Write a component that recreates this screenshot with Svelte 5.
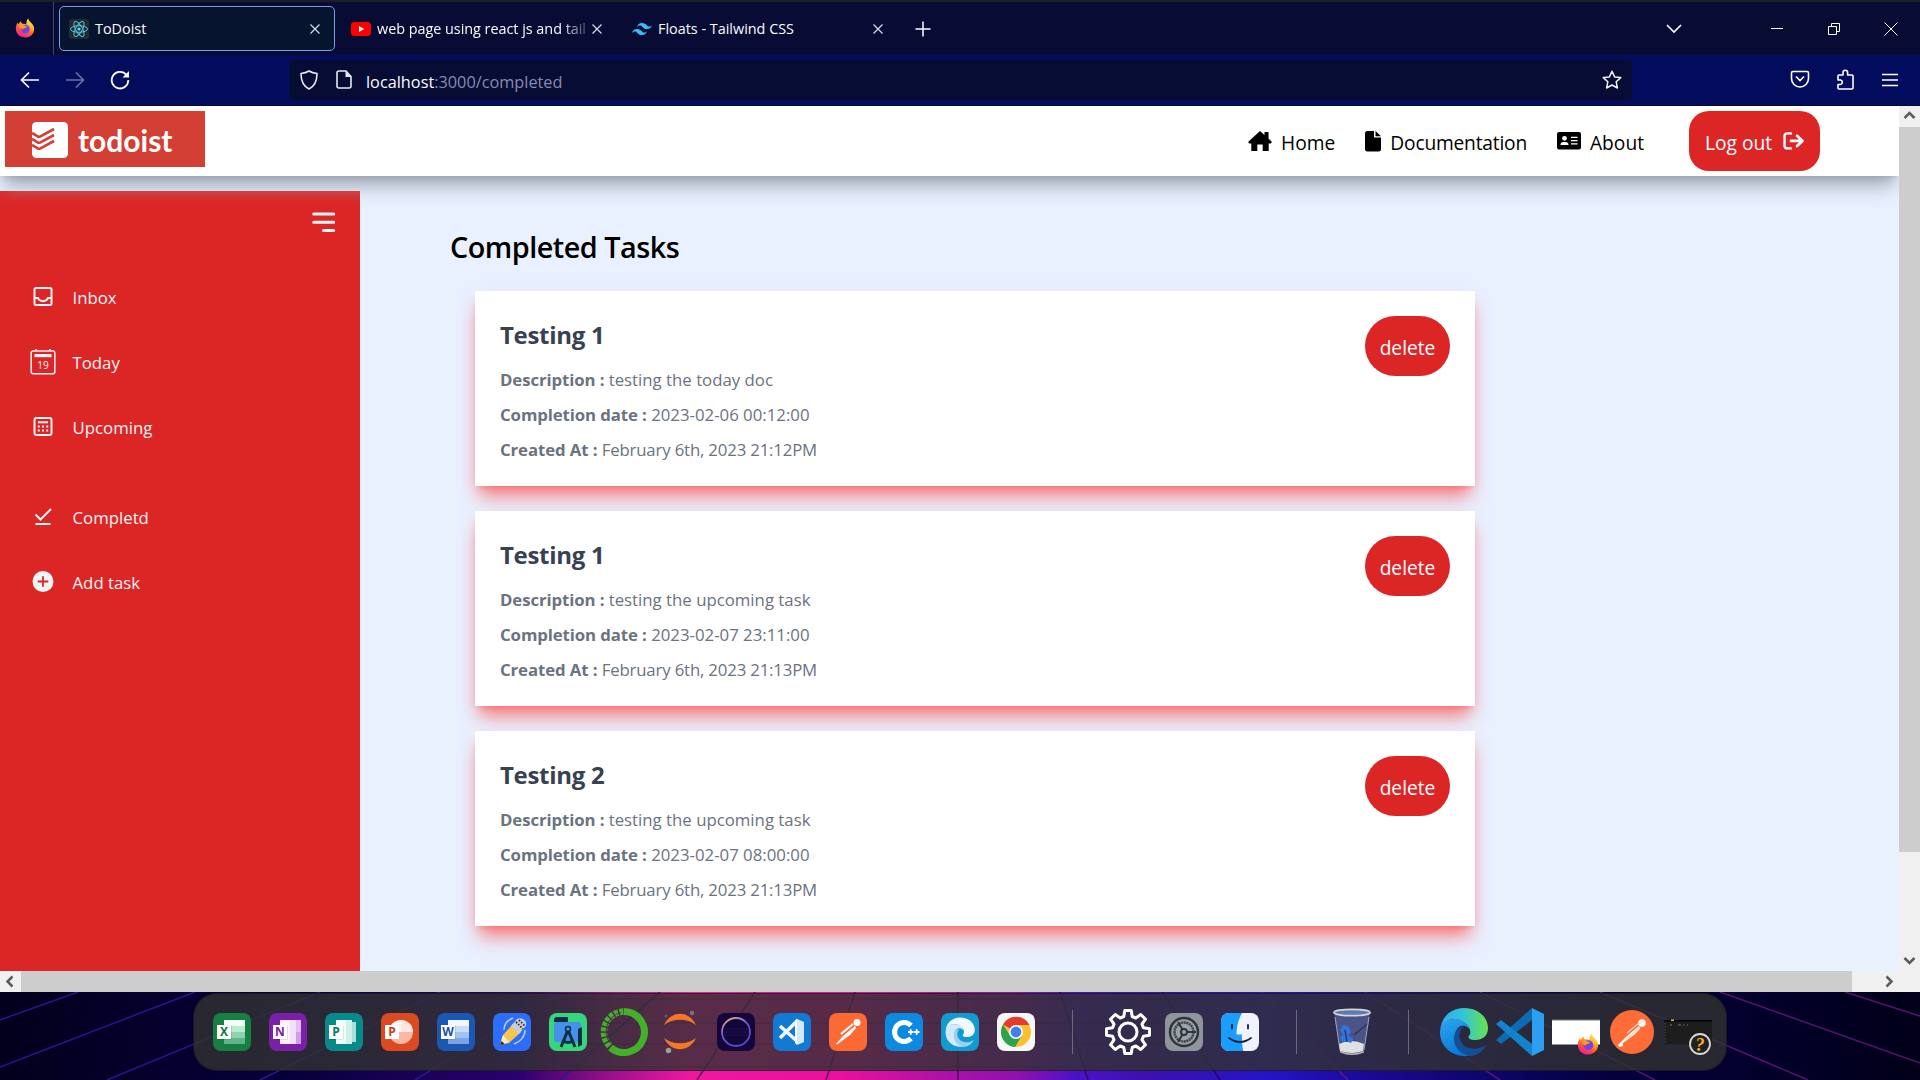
<script>
  const tabs = [
    { icon: 'react', title: 'ToDoist', active: true },
    { icon: 'youtube', title: 'web page using react js and tail', clipped: true },
    { icon: 'tailwind', title: 'Floats - Tailwind CSS' },
  ];

  const menu = [
    { icon: 'inbox', label: 'Inbox' },
    { icon: 'today', label: 'Today' },
    { icon: 'upcoming', label: 'Upcoming' },
    { icon: 'check', label: 'Completd', gap: true },
    { icon: 'add', label: 'Add task' },
  ];

  const tasks = [
    { title: 'Testing 1', description: 'testing the today doc', due: '2023-02-06 00:12:00', created: 'February 6th, 2023 21:12PM' },
    { title: 'Testing 1', description: 'testing the upcoming task', due: '2023-02-07 23:11:00', created: 'February 6th, 2023 21:13PM' },
    { title: 'Testing 2', description: 'testing the upcoming task', due: '2023-02-07 08:00:00', created: 'February 6th, 2023 21:13PM' },
  ];

  const dock = [
    'excel', 'onenote', 'publisher', 'powerpoint', 'word', 'notability', 'android', 'anaconda', 'jupyter',
    'eclipse', 'vscode', 'postman', 'cpp', 'edge', 'chrome', 'sep', 'gear', 'settings', 'finder', 'sep',
    'trash', 'sep', 'edgeBig', 'codeBig', 'ffwin', 'postmanBig', 'terminal',
  ];

  const office = {
    excel: { letter: 'X', tile: '#15803f', ink: '#15713c', c: ['#f2fff8', '#b9ecd0', '#8fd3ae', '#63b388'] },
    onenote: { letter: 'N', tile: '#7b1fa8', ink: '#7719aa', c: ['#fbf2ff', '#f3defc', '#e5bdf5', '#d29bea'] },
    publisher: { letter: 'P', tile: '#068a8a', ink: '#077568', c: ['#effffd', '#cdf0ec', '#a9dfda', '#7fc9c3'] },
    word: { letter: 'W', tile: '#1b57b5', ink: '#1b52ad', c: ['#f2f7ff', '#c9dcfb', '#a3c2f4', '#7ba3e6'] },
  };
</script>

{#snippet firefox(size)}
  <svg width={size} height={size} viewBox="0 0 24 24">
    <defs>
      <linearGradient id="ffFlame" x1="0.8" y1="0" x2="0.3" y2="1">
        <stop offset="0" stop-color="#fff44f" /><stop offset="0.35" stop-color="#ffb42a" />
        <stop offset="0.65" stop-color="#ff5a36" /><stop offset="1" stop-color="#f0159a" />
      </linearGradient>
    </defs>
    <path d="M15.6 0.6c1 1.600 1.400 3 3 4.500C21.500 7.600 23 10 23 13.200 23 19.200 18 23.500 12 23.500S1 19 1 13c0-3 .8-5.600 2.300-7.600.2 1 .5 1.600 1 2C5 6 6 4.600 7.300 3.900c0 1.500.5 2.400 1.500 2.900 2.500-.2 4 .3 4.500 1.200C14 6 13.500 3 15.600.600z" fill="url(#ffFlame)" />
    <circle cx="12.400" cy="13.300" r="5.300" fill="#7542e5" />
    <path d="M5.200 9.200c2.200-1.400 4.600-1.100 6 .1 1.400-.1 2.700.2 3.300.9-1.200 1.900-4.500 1.700-5.600 3.600C7.600 12.400 5.400 11.600 5.200 9.200z" fill="#ff9b1c" />
  </svg>
{/snippet}

{#snippet closeX(size)}
  <svg width={size} height={size} viewBox="0 0 12 12"><path d="M1.500 1.500l9 9M10.500 1.500l-9 9" stroke="#d8dcec" stroke-width="1.200" fill="none" /></svg>
{/snippet}

{#snippet favicon(name)}
  {#if name === 'react'}
    <svg width="20" height="20" viewBox="0 0 20 20">
      <rect width="20" height="20" rx="2.500" fill="#222a30" />
      <g fill="none" stroke="#55c3de" stroke-width="1">
        <ellipse cx="10" cy="10" rx="8.500" ry="3.300" />
        <ellipse cx="10" cy="10" rx="8.500" ry="3.300" transform="rotate(60 10 10)" />
        <ellipse cx="10" cy="10" rx="8.500" ry="3.300" transform="rotate(120 10 10)" />
      </g>
      <circle cx="10" cy="10" r="1.600" fill="#61dafb" />
    </svg>
  {:else if name === 'youtube'}
    <svg width="20" height="20" viewBox="0 0 20 20"><rect y="3" width="20" height="14" rx="3.500" fill="#f00" /><path d="M8 7l5.200 3L8 13z" fill="#fff" /></svg>
  {:else}
    <svg width="20" height="20" viewBox="0 0 24 24"><path fill="#38bdf8" d="M12 4.800c-3.200 0-5.200 1.600-6 4.800 1.200-1.600 2.600-2.200 4.200-1.800.9.200 1.600.9 2.300 1.700C13.700 10.700 15 12 18 12c3.200 0 5.200-1.600 6-4.800-1.200 1.600-2.600 2.200-4.200 1.800-.9-.2-1.600-.9-2.300-1.700C16.300 6.100 15 4.800 12 4.800zM6 12c-3.200 0-5.200 1.600-6 4.800 1.200-1.600 2.600-2.200 4.200-1.800.9.200 1.600.9 2.300 1.700 1.200 1.200 2.500 2.500 5.500 2.500 3.200 0 5.200-1.600 6-4.800-1.200 1.600-2.600 2.200-4.200 1.800-.9-.2-1.600-.9-2.300-1.700C10.300 13.300 9 12 6 12z" /></svg>
  {/if}
{/snippet}

{#snippet sideIcon(name)}
  <svg width="26" height="26" viewBox="0 0 26 26" fill="none" stroke="#f3f4f6">
    {#if name === 'inbox'}
      <rect x="4.500" y="4" width="17" height="17" rx="1.500" stroke-width="2" />
      <path d="M4.500 14h3.500c1.500 4.200 8.500 4.200 10 0h3.500" stroke-width="2" />
    {:else if name === 'today'}
      <rect x="1.200" y="2" width="23.600" height="22.800" rx="2" stroke-width="1.500" />
      <path d="M6 0v2M20 0v2" stroke-width="1.500" />
      <rect x="4.500" y="5" width="17" height="3.200" fill="#f3f4f6" stroke="none" />
      <text class="day" x="13" y="20" text-anchor="middle">19</text>
    {:else if name === 'upcoming'}
      <rect x="4.500" y="4" width="17" height="17" rx="2" stroke-width="2" />
      <path d="M8 8.300h10" stroke-width="2" />
      <path d="M7.800 12.500h10.500M7.800 16.500h10.500" stroke-width="2" stroke-dasharray="2 2.200" />
    {:else if name === 'check'}
      <path d="M5.500 10.500l5 5L21 5" stroke-width="2" />
      <path d="M5.500 20h15" stroke-width="2" />
    {:else}
      <circle cx="13" cy="12.500" r="10.500" fill="#f3f4f6" stroke="none" />
      <path d="M13 7.200v10.600M7.700 12.500h10.600" stroke="#dc2626" stroke-width="1.800" />
    {/if}
  </svg>
{/snippet}

{#snippet dockIcon(name)}
  <svg width="48" height="48" viewBox="0 0 48 48">
    {#if office[name]}
      {@const o = office[name]}
      <rect x="5" y="5" width="38" height="38" rx="8" fill={o.tile} />
      {#if name === 'publisher'}<rect x="22" y="14" width="14" height="20" fill={o.c[2]} />{/if}
      {#if name === 'onenote' || name === 'publisher'}
        <rect x="16" y="12" width="16" height="24" fill={o.c[0]} />
        <rect x="26" y="12" width="6" height="24" fill={o.c[1]} />
        {#if name === 'onenote'}<path d="M32 12h5v24h-5z" fill={o.c[2]} /><path d="M32 24h5v12h-5z" fill={o.c[3]} />{/if}
      {:else}
        <rect x="16" y="12" width="21" height="6" fill={o.c[0]} />
        <rect x="16" y="18" width="21" height="6" fill={o.c[1]} />
        <rect x="16" y="24" width="21" height="6" fill={o.c[2]} />
        <rect x="16" y="30" width="21" height="6" fill={o.c[3]} />
      {/if}
      <rect x="9.500" y="17.500" width="14" height="14" fill="#0003" />
      <rect x="9" y="17" width="14" height="14" fill="#fff" />
      <text class="office" x="16" y="28" text-anchor="middle" fill={o.ink}>{o.letter}</text>
    {:else if name === 'powerpoint'}
      <rect x="5" y="5" width="38" height="38" rx="8" fill="#dc4a22" />
      <circle cx="25" cy="24" r="12" fill="#fbb9a5" />
      <path d="M25 24V12a12 12 0 0 1 12 12z" fill="#ffe7df" />
      <path d="M25 12a12 12 0 0 0-12 12h12z" fill="#fff4ef" />
      <rect x="9" y="17" width="14" height="14" fill="#fff" />
      <text class="office" x="16" y="28" text-anchor="middle" fill="#c8401d">P</text>
    {:else if name === 'notability'}
      <rect x="5" y="5" width="38" height="38" rx="8" fill="#2c6dfb" />
      <path d="M16 22C16 16 20 12 25 10M37 22c0 7-5 12-11 14" stroke="#b9cdf5" stroke-width="1.500" fill="none" />
      <path d="M12 37l3-10L25 16l8 8-12 11z" fill="#f7c548" />
      <path d="M15 27l6 7-9 3z" fill="#ffe9c4" /><path d="M12 37l1.500-4 3 3z" fill="#222" />
      <path d="M23 18l6-7c5-3 12 3 8 8l-6 7z" fill="#c8ccd4" />
      <path d="M28 14l7 7M31 12l6 6" stroke="#2a2e36" stroke-width="1.800" stroke-dasharray="1.500 1.500" />
    {:else if name === 'android'}
      <rect x="5" y="5" width="38" height="38" rx="8" fill="#37d67e" />
      <rect x="10" y="14" width="27" height="20" rx="3" fill="#4690ea" />
      <path d="M10 12q0-3 3-3h11v5H10z" fill="#083042" /><path d="M34 21l4-2v18l-4 2z" fill="#083042" />
      <path d="M24 22l-7 17M24 22l7 17M19 33q5 3 10 0" stroke="#083042" stroke-width="3" fill="none" />
      <circle cx="24" cy="21" r="2.500" fill="#4690ea" stroke="#083042" stroke-width="1.500" />
    {:else if name === 'anaconda'}
      <path d="M24 3.500a20.500 20.500 0 1 1-13.500 36" stroke="#43b02a" stroke-width="7" fill="none" />
      <path d="M9.500 38A20.500 20.500 0 0 1 24 3.500" stroke="#43b02a" stroke-width="6.500" fill="none" stroke-dasharray="4 1.300" />
      <path d="M10 35A19.500 19.500 0 0 1 21 4.500" stroke="#4a2d45" stroke-width="1" fill="none" />
    {:else if name === 'jupyter'}
      <path d="M8 17c7-15 25-15 32 0-9-7-23-7-32 0zM8 30c7 15 25 15 32 0-9 7-23 7-32 0z" fill="#f37726" />
      <circle cx="36" cy="5" r="2.200" fill="#767677" /><circle cx="12.500" cy="42.500" r="2.700" fill="#9e9e9e" /><circle cx="10" cy="8" r="1.500" fill="#616262" />
    {:else if name === 'eclipse'}
      <rect x="5" y="5" width="38" height="38" rx="8" fill="#15053a" />
      <circle cx="24" cy="24" r="14" fill="#120838" stroke="url(#eclipseRing)" stroke-width="1.800" />
      <path d="M12 21h24M11 24h26M12 27h24" stroke="#211052" stroke-width="1" />
    {:else if name === 'vscode'}
      <rect x="5" y="5" width="38" height="38" rx="8" fill="#127ad1" />
      <path d="M12 18l18 16M12 30l18-18" stroke="#f2f8ff" stroke-width="3.500" fill="none" />
      <path d="M29 11l7 3v20l-7 3z" fill="#d3e8ff" /><path d="M29 11v26l-2-2V13z" fill="#fff" />
    {:else if name === 'postman'}
      <rect x="5" y="5" width="38" height="38" rx="8" fill="#fb6a34" />
      <circle cx="33" cy="14.500" r="3.500" fill="#fff" />
      <path d="M31 18L19 28l-7 8 1 .5L26 27l6-7z" fill="#fff" /><path d="M17 26l12-10" stroke="#fff" stroke-width="2" />
    {:else if name === 'cpp'}
      <rect x="5" y="5" width="38" height="38" rx="8" fill="#0c8ae2" />
      <path d="M31 17.500a9.500 9.500 0 1 0 0 13" stroke="#fff" stroke-width="5" fill="none" />
      <path d="M28 24h5.500M30.700 21.300v5.500M34 24h5.500M36.700 21.300v5.500" stroke="#fff" stroke-width="1.800" />
    {:else if name === 'edge'}
      <rect x="5" y="5" width="38" height="38" rx="8" fill="#119bcf" />
      <g transform="translate(9.500 9.500) scale(0.610)">
        <path d="M46 37c-4 7-12 11-21 11C11 48 0 38 0 24 1 14 8 11 15 11c9 0 15 5 15 12 0-5-12-10-15 3-1 11 10 20 21 17 4-1 7-4 10-6z" fill="#d2eafd" />
        <path d="M14 31c0 9 8 17 18 17 6-1 11-5 14-10.500-10 5-20 4-24-2.500-5-7-2-14 2-16-7 0-10 6-10 12z" fill="#9dcdf5" />
        <path d="M0 23C1 9 11 0 24 0c14 0 24 9 24 20 0 9-7 12-13 12-5 0-7-2-6.500-3.500 2-2 2-4 1.500-7C28 14 20 11 14 11 7 11 1 16 0 23z" fill="#f1f9ff" />
      </g>
    {:else if name === 'chrome'}
      <rect x="5" y="5" width="38" height="38" rx="8" fill="#f6f7fb" />
      <circle cx="24" cy="24" r="15" fill="#fbc02d" />
      <path d="M24 24L11 16.500A15 15 0 0 1 37.500 17H24z" fill="#e33b2e" />
      <path d="M11 16.500A15 15 0 0 0 23 39l7-11.500H18z" fill="#2ba24c" />
      <circle cx="24" cy="24" r="7" fill="#fff" /><circle cx="24" cy="24" r="5.400" fill="#3f80ee" />
    {:else if name === 'gear'}
      <path d="M20.800 2.500h6.400l1 6 3.600 1.500 5-3.500 4.700 4.700-3.500 5 1.500 3.600 6 1v6.400l-6 1-1.500 3.600 3.500 5-4.700 4.700-5-3.500-3.600 1.500-1 6h-6.400l-1-6-3.600-1.500-5 3.500-4.700-4.700 3.500-5L8.500 28.200l-6-1v-6.400l6-1L10 16.200l-3.500-5 4.700-4.700 5 3.500 3.600-1.500z" fill="none" stroke="#fff" stroke-width="3" stroke-linejoin="round" />
      <circle cx="24" cy="24" r="9" fill="none" stroke="#fff" stroke-width="3" />
    {:else if name === 'settings'}
      <rect x="5" y="5" width="38" height="38" rx="8" fill="#8f959c" />
      <circle cx="24" cy="24" r="14" fill="#9aa1a8" stroke="#30363b" stroke-width="2.500" />
      <circle cx="24" cy="24" r="9.500" fill="none" stroke="#3d4449" stroke-width="2.500" stroke-dasharray="2 .6" />
      <circle cx="24" cy="24" r="3" fill="none" stroke="#30363b" stroke-width="2" />
      <path d="M27 24h9M22.500 21.500L18 14M22.500 26.500L18 34" stroke="#30363b" stroke-width="2" />
    {:else if name === 'finder'}
      <rect x="5" y="5" width="38" height="38" rx="8" fill="#eef3fd" />
      <path d="M26 5c-4 7-5.500 14-5.500 21.500h5.500c-.3 6 0 11 1.300 16.500H13a8 8 0 0 1-8-8V13a8 8 0 0 1 8-8z" fill="#1a9dfc" />
      <path d="M16 17v3.500M32 17v3.500" stroke="#15202c" stroke-width="1.800" stroke-linecap="round" />
      <path d="M13 30q11 8 22 0" stroke="#15202c" stroke-width="1.800" fill="none" stroke-linecap="round" />
    {:else if name === 'trash'}
      <path d="M6 4h36l-6 40q-12 5-24 0z" fill="#5a6ca8" opacity="0.650" />
      <path d="M11 36q12-6 25 0l-1 7q-11 4-23 0z" fill="#dfe0df" />
      <path d="M12 22l3-5 5 1 3 6-3 3 5 4-2 4-5-2-4 1-2-5 3-2z" fill="#2f76e0" />
      <path d="M17 22l2 12M26 27l13-11" stroke="#2b3768" stroke-width="1.500" />
      <ellipse cx="24" cy="4.500" rx="18" ry="3.200" fill="#5d79b8" stroke="#d6d6d3" stroke-width="1.800" />
      <path d="M12 43q12 5 24 0v1.500q-12 5-24 0z" fill="#b9b9b6" />
      <path d="M7 9l5 33M41 9l-5 33" stroke="#c4cadf" stroke-width="1" opacity="0.700" />
    {:else if name === 'edgeBig'}
      <path d="M46 37c-4 7-12 11-21 11C11 48 0 38 0 24 1 14 8 11 15 11c9 0 15 5 15 12 0-5-12-10-15 3-1 11 10 20 21 17 4-1 7-4 10-6z" fill="url(#edgeBlue)" />
      <path d="M14 31c0 9 8 17 18 17 6-1 11-5 14-10.500-10 5-20 4-24-2.500-5-7-2-14 2-16-7 0-10 6-10 12z" fill="#124f97" />
      <path d="M0 23C1 9 11 0 24 0c14 0 24 9 24 20 0 9-7 12-13 12-5 0-7-2-6.500-3.500 2-2 2-4 1.500-7C28 14 20 11 14 11 7 11 1 16 0 23z" fill="url(#edgeGreen)" />
    {:else if name === 'codeBig'}
      <path d="M0 32l5 4 31-24V0z" fill="#0d6bb0" /><path d="M0 16l5-4 31 24v12z" fill="#1283cc" />
      <path d="M36 0l12 6v36l-12 6z" fill="#2ba0f3" />
    {:else if name === 'ffwin'}
      <rect y="12" width="48" height="24.500" fill="#fff" /><rect y="11.500" width="48" height="1" fill="#777" />
      <g transform="translate(25 25)">{@render firefox(22)}</g>
    {:else if name === 'postmanBig'}
      <circle cx="24" cy="24" r="22" fill="#ff6c37" />
      <circle cx="34" cy="15" r="3.800" fill="#fff" />
      <path d="M31 18L19 28l-9 9 1 2 4-1 0-3L26 27l6-6z" fill="#fff" />
      <path d="M19 25l12-10M31 16l5-3M32 19L18 32" stroke="#ffd2c0" stroke-width="1.200" />
    {:else if name === 'terminal'}
      <rect y="12" width="48" height="24.500" fill="#1d1d1d" /><rect y="12" width="48" height="1.500" fill="#050505" />
      <path d="M1 15v20" stroke="#4a4a4a" stroke-dasharray="1.500 1.500" /><rect x="7" y="11.500" width="3" height="1.500" fill="#c9c44b" />
      <path d="M6 17h2M14 17h3M19 17h1.500M23 17h1" stroke="#777" />
      <circle cx="36" cy="36" r="10" fill="#222" stroke="#d8d8d8" stroke-width="1.800" />
      <text class="ask" x="36" y="42.500" text-anchor="middle">?</text>
    {/if}
  </svg>
{/snippet}

<div class="screen">
  <div class="tabstrip">
    <div class="brand">{@render firefox(20)}</div>
    <div class="tabs">
      {#each tabs as tab}
        <div class="tab" class:active={tab.active}>
          {@render favicon(tab.icon)}
          <span class="tab-title" class:clipped={tab.clipped}>{tab.title}</span>
          {@render closeX(12)}
        </div>
      {/each}
    </div>
    <svg class="plus" width="16" height="16" viewBox="0 0 16 16"><path d="M8 .5v15M.5 8h15" stroke="#fff" stroke-width="1.500" /></svg>
    <div class="window-controls">
      <svg width="18" height="18" viewBox="0 0 18 18"><path d="M2 5l7 7 7-7" fill="none" stroke="#fff" stroke-width="1.600" /></svg>
      <svg class="min" width="14" height="14" viewBox="0 0 14 14"><path d="M1 6.500h12" stroke="#fff" /></svg>
      <svg width="14" height="14" viewBox="0 0 14 14"><path d="M1.500 4.500h8v8h-8zM4.500 4.500v-3h8v8h-3" fill="none" stroke="#fff" /></svg>
      <svg width="14" height="14" viewBox="0 0 14 14"><path d="M.5.500l13 13M13.500.500l-13 13" stroke="#fff" /></svg>
    </div>
  </div>

  <div class="toolbar">
    <div class="history">
      <svg width="20" height="18" viewBox="0 0 20 18"><path d="M19 9H2M9 1.500L1.500 9 9 16.500" fill="none" stroke="#fff" stroke-width="1.700" /></svg>
      <svg width="20" height="18" viewBox="0 0 20 18"><path d="M1 9h17M11 1.500L18.500 9 11 16.500" fill="none" stroke="#6670a6" stroke-width="1.700" /></svg>
      <svg width="20" height="20" viewBox="0 0 20 20"><path d="M16.500 5A8.300 8.300 0 1 0 18.300 10" fill="none" stroke="#fff" stroke-width="1.800" /><path d="M19 1v6.500h-6.500z" fill="#fff" /></svg>
    </div>
    <div class="urlbar">
      <svg width="20" height="20" viewBox="0 0 20 20"><path d="M10 1c2.500 1.700 5 2.300 8 2.500 0 7-2 12.500-8 15.500-6-3-8-8.500-8-15.500C5 3.300 7.500 2.700 10 1z" fill="none" stroke="#e8eaf4" stroke-width="1.600" stroke-linejoin="round" /></svg>
      <svg width="16" height="20" viewBox="0 0 16 20"><path d="M1 3q0-2 2-2h7l5 5.500V16q0 2-2 2H3q-2 0-2-2z" fill="none" stroke="#e8eaf4" stroke-width="1.600" /><path d="M9.500 1v6H15z" fill="#e8eaf4" /></svg>
      <span class="url"><b>localhost</b>:3000/completed</span>
      <svg width="20" height="20" viewBox="0 0 20 20"><path d="M10 1.300l2.600 5.600 6.100.7-4.500 4.200 1.200 6.200L10 15l-5.400 3 1.200-6.200L1.300 7.600l6.100-.7z" fill="none" stroke="#f2f3fa" stroke-width="1.500" stroke-linejoin="round" /></svg>
    </div>
    <div class="tools">
      <svg width="20" height="20" viewBox="0 0 20 20"><path d="M3 1.500h14q1.500 0 1.500 1.500v5.500a8.500 8.500 0 0 1-17 0V3Q1.500 1.500 3 1.500z" fill="none" stroke="#fff" stroke-width="1.600" /><path d="M6 6.500l4 4 4-4" fill="none" stroke="#fff" stroke-width="1.600" /></svg>
      <svg width="20" height="22" viewBox="0 0 20 22"><path d="M8 6V3.500a2.300 2.300 0 0 1 4.600 0V6H17q1 0 1 1v12q0 1-1 1H4q-1 0-1-1v-3.500h2.500a2.300 2.300 0 0 0 0-4.500H3V7q0-1 1-1z" fill="none" stroke="#fff" stroke-width="1.600" stroke-linejoin="round" /></svg>
      <svg class="menu" width="16" height="16" viewBox="0 0 16 16"><path d="M0 2.500h16M0 8h16M0 13.500h16" stroke="#fff" stroke-width="1.500" /></svg>
    </div>
  </div>

  <div class="viewport">
    <div class="page">
      <nav class="navbar">
        <div class="logo">
          <svg width="36" height="36" viewBox="0 0 36 36">
            <rect width="36" height="36" rx="4.500" fill="#fff" />
            <path d="M0 11l6 3.600q1 .5 2 0L22 7M0 17l6 3.600q1 .5 2 0L22 13M0 23l6 3.600q1 .5 2 0L22 19" fill="none" stroke="#d33f35" stroke-width="2.700" />
          </svg>
          <span>todoist</span>
        </div>
        <div class="links">
          <a class="home" href="#home">
            <svg width="24" height="22" viewBox="0 0 24 22"><path d="M12 1l4.500 4V2h4v6.500L24 12l-1.300 1.500h-2V21h-6v-6.500H9.300V21h-6v-7.500h-2L0 12z" fill="#000" /></svg>
            <span>Home</span>
          </a>
          <a class="docs" href="#docs">
            <svg width="16" height="22" viewBox="0 0 16 22"><path d="M2.500 1H9v6.500h7V19q0 2.500-2.500 2.500h-11Q0 21.500 0 19V3.500Q0 1 2.500 1zM10.500 1L16 6.200h-5.500z" fill="#000" /></svg>
            <span>Documentation</span>
          </a>
          <a class="about" href="#about">
            <svg width="24" height="18" viewBox="0 0 24 18"><rect width="24" height="17.500" rx="2" fill="#000" /><circle cx="7.500" cy="6.300" r="2.400" fill="#fff" /><path d="M3.500 13q0-3 3-3h2q3 0 3 3zM14 4.800h6.500v1.300H14zM14 8h6.500v1.300H14zM14 11.200h6.500v1.300H14z" fill="#fff" /></svg>
            <span>About</span>
          </a>
        </div>
        <button class="logout">
          <span>Log out</span>
          <svg width="22" height="18" viewBox="0 0 22 18"><path d="M8 1.400H4.500q-3 0-3 3v9q0 3 3 3H8" fill="none" stroke="#fff" stroke-width="2.400" stroke-linecap="round" /><path d="M8 8.900h11M14 3.800l5.500 5.100L14 14" fill="none" stroke="#fff" stroke-width="2.700" stroke-linecap="round" stroke-linejoin="round" /></svg>
        </button>
      </nav>

      <div class="body">
        <aside class="sidebar">
          <svg class="burger" width="24" height="21" viewBox="0 0 24 21"><path d="M1.700 2h20M1.700 10.200h20M11.500 18.400h10.200" stroke="#f3f4f6" stroke-width="3" stroke-linecap="round" /></svg>
          <ul>
            {#each menu as item}
              <li class:gap={item.gap}>{@render sideIcon(item.icon)}<span>{item.label}</span></li>
            {/each}
          </ul>
        </aside>
        <main>
          <h1>Completed Tasks</h1>
          <div class="cards">
            {#each tasks as task}
              <article class="card">
                <div class="info">
                  <h2>{task.title}</h2>
                  <p><b>Description :</b> <span>{task.description}</span></p>
                  <p><b>Completion date :</b> <span>{task.due}</span></p>
                  <p><b>Created At :</b> <span class="created">{task.created}</span></p>
                </div>
                <button class="delete">delete</button>
              </article>
            {/each}
          </div>
        </main>
      </div>
    </div>
    <div class="vscroll">
      <svg width="21" height="21" viewBox="0 0 21 21"><path d="M5.500 12l5-5 5 5" fill="none" stroke="#5c5c5c" stroke-width="2.500" /></svg>
      <div class="vthumb"></div>
      <svg width="21" height="21" viewBox="0 0 21 21"><path d="M5.500 8l5 5 5-5" fill="none" stroke="#5c5c5c" stroke-width="2.500" /></svg>
    </div>
  </div>
  <div class="hscroll">
    <svg width="21" height="21" viewBox="0 0 21 21"><path d="M12.500 5.500l-5 5 5 5" fill="none" stroke="#5c5c5c" stroke-width="2.500" /></svg>
    <div class="hthumb"></div>
    <svg width="21" height="21" viewBox="0 0 21 21"><path d="M8.500 5.500l5 5-5 5" fill="none" stroke="#5c5c5c" stroke-width="2.500" /></svg>
  </div>

  <div class="desktop">
    <svg class="wallpaper" width="1920" height="88" viewBox="0 0 1920 88">
      <defs>
        <linearGradient id="sky">
          <stop offset="0" stop-color="#02001c" /><stop offset="0.150" stop-color="#06003a" /><stop offset="0.270" stop-color="#2a0070" />
          <stop offset="0.320" stop-color="#a0108c" /><stop offset="0.360" stop-color="#f0189f" /><stop offset="0.440" stop-color="#e8109c" />
          <stop offset="0.490" stop-color="#b010a8" /><stop offset="0.530" stop-color="#9010b0" /><stop offset="0.560" stop-color="#4a12c8" />
          <stop offset="0.600" stop-color="#3c10b0" /><stop offset="0.660" stop-color="#2414c8" /><stop offset="0.720" stop-color="#1a0890" />
          <stop offset="0.780" stop-color="#0c0468" /><stop offset="0.840" stop-color="#04003c" /><stop offset="1" stop-color="#010018" />
        </linearGradient>
        <linearGradient id="eclipseRing" x1="0" y1="0" x2="0.500" y2="1"><stop offset="0" stop-color="#f7b27a" /><stop offset="0.500" stop-color="#6d55d8" /><stop offset="1" stop-color="#5a4ad0" /></linearGradient>
        <linearGradient id="edgeBlue" x1="0" y1="0" x2="0.600" y2="1"><stop offset="0" stop-color="#2ba8f0" /><stop offset="1" stop-color="#0672cf" /></linearGradient>
        <linearGradient id="edgeGreen"><stop offset="0" stop-color="#2fa9f5" /><stop offset="0.450" stop-color="#30c3dc" /><stop offset="1" stop-color="#66e34b" /></linearGradient>
      </defs>
      <rect width="1920" height="88" fill="url(#sky)" />
      <g stroke="#2a1690" stroke-width="1.500">
        <path d="M0 28L78 0M0 75L195 0M107 88L320 0M260 88L440 0M415 88L560 0M560 88L660 0" />
      </g>
      <g stroke="#28003c" stroke-width="1.500" opacity="0.700">
        <path d="M697 88L755 0M826 88L855 0M958 88V0M1088 88L1060 0M1220 88L1162 0" />
        <path d="M560 7h640M560 31h640M560 52h640M560 75h640" opacity="0.500" />
      </g>
      <g stroke="#6a1a80" stroke-width="1.500" opacity="0.800">
        <path d="M1348 88L1262 0M1500 88L1365 0M1655 88L1480 0M1808 88L1600 0M1920 71L1720 0M1920 24L1845 0" />
      </g>
    </svg>
    <div class="dock">
      {#each dock as name}
        <div class="slot">
          {#if name === 'sep'}<span class="sep"></span>{:else}{@render dockIcon(name)}{/if}
        </div>
      {/each}
    </div>
  </div>
</div>

<style>
  :global(body) { margin: 0; background: #02001c; }
  .screen { width: 1920px; height: 1080px; overflow: hidden; display: flex; flex-direction: column; font-family: "Open Sans", "Noto Sans", sans-serif; box-sizing: border-box; border-top: 2px solid #1c2029; }
  svg { display: block; flex: none; }

  .tabstrip { height: 53px; background: #080c34; display: flex; align-items: center; flex: none; }
  .brand { width: 49px; height: 53px; border-right: 1px solid #3f4468; display: flex; align-items: center; justify-content: center; padding: 0 4px 2px 0; box-sizing: content-box; }
  .tabs { display: flex; padding-left: 5px; gap: 5px; align-items: center; }
  .tab { width: 276px; height: 45px; box-sizing: border-box; border: 1px solid transparent; border-radius: 5px; display: flex; align-items: center; padding: 0 13px 0 9px; }
  .tab.active { background: #071430; border-color: #7d9de4; }
  .tab-title { flex: 1; margin-left: 6px; font-size: 14.400px; color: #fbfbfe; white-space: nowrap; line-height: 24px; }
  .tab-title.clipped { margin-right: -4px; letter-spacing: -0.020px; -webkit-mask-image: linear-gradient(to right, #000 84%, transparent 100%); mask-image: linear-gradient(to right, #000 84%, transparent 100%); }
  .tab + .tab { padding-left: 10px; padding-right: 12px; }
  .plus { margin-left: 18px; }
  .window-controls { margin-left: auto; display: flex; align-items: center; padding-right: 22px; gap: 43px; }
  .window-controls .min { margin-left: 1px; }
  .window-controls svg:first-child { margin-right: 43px; }

  .toolbar { height: 50px; background: #040c5e; border-bottom: 1px solid #060a30; display: flex; align-items: center; flex: none; }
  .history { display: flex; align-items: center; gap: 25px; padding-left: 20px; width: 269px; box-sizing: border-box; }
  .urlbar { margin-left: 20px; width: 1343px; height: 40px; box-sizing: border-box; background: #070c34; border-radius: 5px; display: flex; align-items: center; padding: 0 10px; }
  .urlbar svg:nth-child(2) { margin-left: 17px; }
  .url { flex: 1; margin-left: 14px; font-size: 16.300px; color: #868bb3; padding-top: 4px; }
  .url b { font-weight: 400; color: #fbfbfe; }
  .tools { margin-left: auto; display: flex; align-items: center; gap: 25px; padding-right: 22px; }
  .tools .menu { margin-left: 2px; }

  .viewport { display: flex; height: 865px; flex: none; }
  .page { flex: 1; background: #e9f0ff; overflow: hidden; display: flex; flex-direction: column; gap: 15px; }
  .navbar { height: 70px; background: #fff; display: flex; align-items: flex-start; padding: 5px 79px 0 5px; box-sizing: border-box; position: relative; z-index: 1; box-shadow: 0 12.500px 18.750px -3.750px #9ca3af, 0 5px 7.500px -5px #9ca3af; flex: none; }
  .logo { width: 200px; height: 56px; background: #d33f35; display: flex; align-items: center; padding: 2px 0 0 27px; box-sizing: border-box; color: #fff; font: 700 30px/50px "Lato", "Open Sans", sans-serif; gap: 10px; }
  .links { margin-left: auto; display: flex; height: 60px; align-items: center; gap: 30px; }
  .links a { display: flex; align-items: center; gap: 9px; color: #000; text-decoration: none; font-size: 19.200px; }
  .links span { padding-top: 2px; }
  .docs span { letter-spacing: -0.200px; }
  .logout { margin-left: 45px; width: 131px; height: 60px; border: 0; border-radius: 20px; background: #dc2626; color: #fff; font: 400 19.200px "Open Sans", sans-serif; display: flex; align-items: center; padding: 0 15px 0 16px; justify-content: space-between; }
  .logout span { padding-top: 2px; }

  .body { display: flex; flex: 1; min-height: 0; }
  .sidebar { width: 360px; background: #dc2626; color: #f3f4f6; flex: none; display: flex; flex-direction: column; }
  .burger { align-self: flex-end; margin: 21px 24px 0 0; }
  .sidebar ul { list-style: none; margin: 44px 0 0; padding: 0 0 0 29.500px; display: flex; flex-direction: column; gap: 25px; }
  .sidebar li { height: 40px; display: flex; align-items: center; gap: 17px; font-size: 16.800px; }
  .sidebar li.gap { margin-top: 25px; }
  .day { font: 400 10px "Open Sans", sans-serif; fill: #f3f4f6; stroke: none; }

  main { padding: 31px 0 0 90px; }
  h1 { margin: 0; font-size: 28.800px; line-height: 50px; font-weight: 600; color: #000; letter-spacing: -0.500px; }
  .cards { margin: 19px 0 0 25px; display: flex; flex-direction: column; gap: 25px; }
  .card { width: 1000px; height: 195px; box-sizing: border-box; background: #fff; padding: 24px 25px; display: flex; justify-content: space-between; align-items: flex-start; box-shadow: 0 12.500px 18.750px -3.750px #f87171, 0 5px 7.500px -5px #f87171; }
  h2 { margin: 0 0 7px; font-size: 24px; line-height: 40px; font-weight: 700; color: #374151; letter-spacing: -0.300px; }
  .card p { margin: 0; font-size: 16.800px; line-height: 35px; color: #6b7280; white-space: nowrap; }
  .card p b { font-weight: 700; letter-spacing: -0.100px; }
  .created { letter-spacing: -0.170px; }
  .delete { margin-top: 1px; width: 85px; height: 60px; border: 0; border-radius: 30px; background: #dc2626; color: #fff; font: 400 19.200px "Open Sans", sans-serif; padding: 3px 0 0; }

  .vscroll { width: 21px; background: #f0f0f0; display: flex; flex-direction: column; }
  .vthumb { height: 725px; background: #cdcdcd; margin-bottom: auto; }
  .hscroll { height: 21px; background: #f0f0f0; display: flex; padding-right: 21px; flex: none; }
  .hthumb { width: 1831px; background: #cdcdcd; margin-right: auto; }

  .desktop { height: 88px; display: grid; flex: none; }
  .wallpaper { grid-area: 1 / 1; }
  .dock { grid-area: 1 / 1; position: relative; width: 1534px; height: 78px; margin: 1px 0 0 193px; box-sizing: border-box; border-radius: 24px; background: rgba(50, 50, 50, 0.800); border: 1px solid rgba(0, 0, 0, 0.350); display: flex; align-items: center; padding: 0 10px; }
  .slot { width: 56px; display: flex; justify-content: center; }
  .sep { width: 1px; height: 44px; background: #8a8292; opacity: 0.700; }
  .office { font: 700 12px "Open Sans", sans-serif; }
  .ask { font: italic 700 18px "Liberation Serif", serif; fill: #ffb01c; }
</style>
